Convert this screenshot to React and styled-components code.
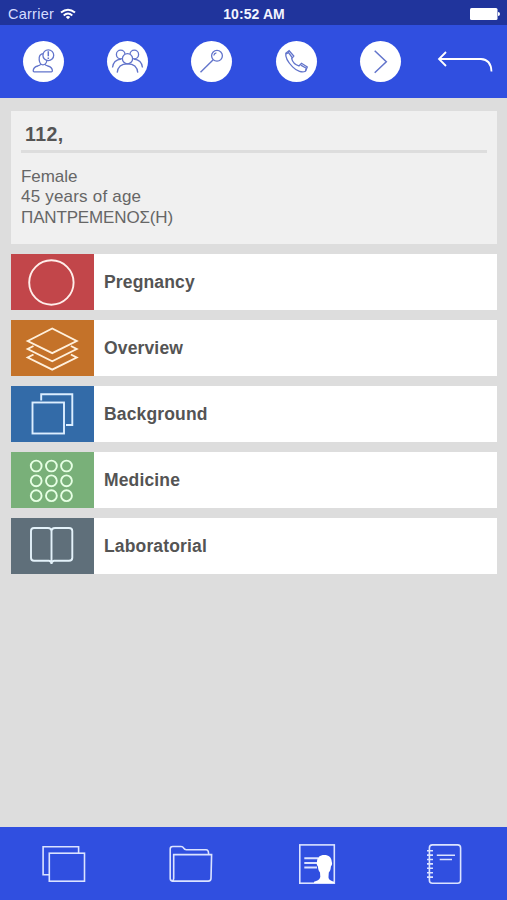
import React from 'react';
import styled, { createGlobalStyle } from 'styled-components';

const GlobalStyle = createGlobalStyle`
  * {
    box-sizing: border-box;
  }

  body {
    margin: 0;
    background-color: #dddddd;
    font-family: "Liberation Sans", Arial, sans-serif;
  }
`;

const Screen = styled.div`
  display: flex;
  flex-direction: column;
  height: 100vh;
  background-color: #dddddd;
`;

const StatusBar = styled.div`
  display: grid;
  grid-template-columns: 1fr auto 1fr;
  align-items: center;
  height: 25px;
  padding: 3px 7px 0 8px;
  background-color: #20349c;
  color: #f2f4ff;
  font-size: 14.5px;
  line-height: 20px;
`;

const Carrier = styled.div`
  display: flex;
  align-items: center;
  gap: 6px;
  color: #d5dcff;
  letter-spacing: 0.25px;
`;

const Clock = styled.div`
  font-size: 14px;
  font-weight: bold;
  letter-spacing: 0.1px;
`;

const Battery = styled.svg`
  justify-self: end;
  margin-right: -1px;
`;

const Toolbar = styled.nav`
  display: grid;
  grid-template-columns: repeat(6, 1fr);
  align-items: center;
  height: 73px;
  padding-left: 1px;
  background-color: #304fe0;
`;

const ToolButton = styled.button`
  display: flex;
  justify-self: center;
  padding: 0;
  border: 0;
  border-radius: ${props => (props.$round ? '50%' : '0')};
  background-color: ${props => (props.$round ? '#ffffff' : 'transparent')};
`;

const Icon = styled.svg`
  display: block;
  fill: none;
  stroke: ${props => props.$color || '#ffffff'};
  stroke-width: ${props => props.$weight || 1.5};
`;

const Content = styled.main`
  flex: 1;
  display: flex;
  flex-direction: column;
  gap: 10px;
  padding: 13px 10px 0 11px;
`;

const PatientCard = styled.section`
  height: 133px;
  padding: 0 10px;
  background-color: #f0f0f0;
  color: #666666;
`;

const PatientName = styled.h1`
  height: 42px;
  margin: 0;
  padding: 2px 4px 0;
  border-bottom: 3px solid #dddddd;
  color: #555555;
  font-size: 19.5px;
  letter-spacing: 0.4px;
  line-height: 42px;
`;

const PatientDetails = styled.div`
  margin-top: 14px;
  font-size: 17px;
  line-height: 20.3px;
`;

const Detail = styled.div`
  letter-spacing: ${props => props.$spacing || '0.2px'};
`;

const MenuRow = styled.div`
  display: flex;
  align-items: center;
  height: 56px;
  background-color: #ffffff;
`;

const Tile = styled.div`
  width: 83px;
  height: 56px;
  background-color: ${props => props.$color};
`;

const MenuLabel = styled.span`
  padding-left: 10px;
  color: #545454;
  font-size: 17.5px;
  font-weight: bold;
  letter-spacing: 0.15px;
`;

const TabBar = styled.nav`
  display: grid;
  grid-template-columns: repeat(4, 1fr);
  align-items: center;
  height: 73px;
  background-color: #304fe0;
`;

const Tab = styled.div`
  display: flex;
  justify-content: center;
`;

const Wifi = () => (
  <svg width="16" height="12" viewBox="0 0 16 12" fill="none" stroke="#ffffff" strokeWidth="2">
    <path d="M1 4.6Q8-1.2 15 4.6M3.7 7.4Q8 3.7 12.3 7.4" />
    <path d="M5.8 9L8 11.3L10.2 9Q8 7 5.8 9Z" fill="#ffffff" stroke="none" />
  </svg>
);

const PatientIcon = () => (
  <>
    <path d="M20.6 12.6c-3.400 0-4.900 2.700-4.400 6.400 .4 3 1.900 4.900 3.700 4.900 2.200 0 3.700-2.100 4.100-4.900" />
    <path d="M17.700 23.200c-.3 1.200-1.200 1.400-2.900 1.800-3 .7-4.500 2.500-4.600 4.800 0 .7.3 1 1 1h17.200c.7 0 1-.3 1-1-.1-2.300-1.700-4.100-4.700-4.800-1.700-.4-2.600-.600-2.900-1.800" />
    <circle cx="25.300" cy="14.200" r="5.400" />
    <path d="M25.300 10.300v5M25.300 16.500v1.500" strokeWidth="1.500" />
  </>
);

const GroupIcon = () => (
  <>
    <circle cx="13.700" cy="13.500" r="4.300" />
    <circle cx="27.300" cy="13.500" r="4.300" />
    <path d="M5.500 26.500c.5-4.600 3.300-7.800 8.700-8.300M35.500 26.500c-.5-4.600-3.300-7.800-8.700-8.300" />
    <circle cx="20.500" cy="17.700" r="5.100" fill="#ffffff" />
    <path d="M10.200 31.600c.5-5.600 4.500-8.800 10.300-8.800s9.800 3.200 10.300 8.800" />
  </>
);

const PinIcon = () => (
  <>
    <circle cx="26" cy="14.800" r="5.400" />
    <path d="M22.200 18.800L9.500 31.300" strokeWidth="1.400" />
    <path d="M22.800 14.500c.2-1.500 1.200-2.500 2.600-2.700" />
  </>
);

const PhoneIcon = () => (
  <>
    <path d="M9.800 12.200l3.300-2.500 4.700 5.400-2.100 2.600c.8 3.300 3.900 6.300 7.200 7.200l2.600-2.600 5.800 3.700-1.900 4.200c-3 1.700-8.400.3-12.800-4.300-4.900-4.900-7.500-9.200-6.800-13.700z" />
    <path d="M10 12.900l2.500-1.300 4 5.400M29.500 30l.8-2.700-5.500-3.200" />
  </>
);

const ChevronIcon = () => (
  <path d="M14.700 9.700L26.300 20.700L14.700 31.700" strokeWidth="1.500" />
);

const tools = [PatientIcon, GroupIcon, PinIcon, PhoneIcon, ChevronIcon];

const CircleIcon = () => <circle cx="40.400" cy="28.500" r="22.200" />;

const LayersIcon = () => (
  <>
    <path d="M16.700 21L41.200 8.500L65.700 21L41.200 33.200Z" />
    <path d="M22.500 26L16.700 29L41.200 41.300L65.700 29L59.900 26" />
    <path d="M22.500 34.500L16.700 37.500L41.200 49.700L65.700 37.500L59.900 34.500" />
  </>
);

const CopyIcon = () => (
  <>
    <rect x="21.500" y="16.500" width="31.500" height="31" />
    <path d="M30.200 14.500V8.300H61.300V39H55" />
  </>
);

const DotsIcon = () => (
  <>
    {[14, 28.800, 43.700].map(y =>
      [25.200, 40.400, 55.500].map(x => <circle key={`${x}-${y}`} cx={x} cy={y} r="5.400" />)
    )}
  </>
);

const BookIcon = () => (
  <>
    <path d="M40.500 45V13.500Q40.500 10 37 10H23Q20 10 20 13V39.700Q20 42.700 23 42.700H38Q40.500 43 40.500 46Q40.500 43 43 42.700H58Q61.300 42.700 61.300 39.700V13Q61.300 10 58 10H44Q40.500 10 40.500 13.500" />
  </>
);

const menu = [
  { label: 'Pregnancy', color: '#c2464a', stroke: '#ffeeea', icon: CircleIcon },
  { label: 'Overview', color: '#c47229', stroke: '#fff0dc', icon: LayersIcon },
  { label: 'Background', color: '#336ba8', stroke: '#dceeff', icon: CopyIcon },
  { label: 'Medicine', color: '#79b079', stroke: '#e6ffe4', icon: DotsIcon },
  { label: 'Laboratorial', color: '#5f6f7a', stroke: '#e4f2fa', icon: BookIcon }
];

const WindowsTab = () => (
  <>
    <path d="M10.300 34.800H4.100V6.800H39.600V13.200" />
    <rect x="10.300" y="13.200" width="35.200" height="28" />
  </>
);

const FolderTab = () => (
  <>
    <path d="M7 41.100Q4.200 41.100 4.200 38.500V9Q4.200 6.500 6.700 6.500H15Q16.800 6.500 17.700 8.200Q18.500 9.800 20.300 9.800H40Q42.600 9.800 42.600 14" />
    <path d="M7.700 14.600H45.600L45 38.500Q44.900 41.100 42.300 41.100H6Q7.700 40.500 7.700 38.500Z" />
  </>
);

const ContactTab = () => (
  <>
    <rect x="6.800" y="4.900" width="34.500" height="38.300" />
    <path d="M11.300 18.300H25M11.300 23H24M11.300 27.500H24" strokeWidth="2" />
    <path
      d="M31.300 15C26.800 15 24 17.600 24 22C23.300 23.500 23.900 25.500 24.900 26.500C25.100 29 25.700 31 27 32.500L27.300 37C26.500 40 24 41 21 41.700V43H41V41.700C37 40.500 35.500 39.500 35.500 37L35.800 32.500C37.300 31 37.700 29 37.900 26.500C38.900 25.500 39.500 23.500 38.800 22C38.600 17.600 35.800 15 31.300 15Z"
      fill="#ffffff"
      stroke="none"
    />
  </>
);

const NotebookTab = () => (
  <>
    <rect x="9.400" y="4.900" width="31.200" height="38.300" rx="3" />
    <path d="M7 10.700H13M7 15.100H13M7 19.500H13M7 23.900H13M7 28.300H13M7 32.700H13M7 37.100H13" />
    <path d="M16.800 15.200H35M19.700 19.500H32" />
  </>
);

const tabs = [WindowsTab, FolderTab, ContactTab, NotebookTab];

const App = () => (
  <Screen>
    <GlobalStyle />
    <StatusBar>
      <Carrier>
        Carrier
        <Wifi />
      </Carrier>
      <Clock>10:52 AM</Clock>
      <Battery width="32" height="14" viewBox="0 0 32 14" fill="#ffffff">
        <rect x="1" y="1" width="27.500" height="12" rx="1.500" />
        <path d="M29 5Q31 5 31 7Q31 9 29 9Z" />
      </Battery>
    </StatusBar>

    <Toolbar>
      {tools.map((Glyph, index) => (
        <ToolButton key={index} $round>
          <Icon width="41" height="41" viewBox="0 0 41 41" $color="#6274cb" $weight={1.3}>
            <Glyph />
          </Icon>
        </ToolButton>
      ))}
      <ToolButton>
        <Icon width="56" height="41" viewBox="0 0 56 41" $weight={1.8}>
          <path d="M9 11L2 18L9 25M2 18H44Q54 18.500 54.500 30.500" />
        </Icon>
      </ToolButton>
    </Toolbar>

    <Content>
      <PatientCard>
        <PatientName>112,</PatientName>
        <PatientDetails>
          <Detail $spacing="-0.05px">Female</Detail>
          <Detail>45 years of age</Detail>
          <Detail $spacing="-0.15px">ΠΑΝΤΡΕΜΕΝΟΣ(Η)</Detail>
        </PatientDetails>
      </PatientCard>
      {menu.map(({ label, color, stroke, icon: Glyph }) => (
        <MenuRow key={label}>
          <Tile $color={color}>
            <Icon width="83" height="56" viewBox="0 0 83 56" $color={stroke} $weight={1.9}>
              <Glyph />
            </Icon>
          </Tile>
          <MenuLabel>{label}</MenuLabel>
        </MenuRow>
      ))}
    </Content>

    <TabBar>
      {tabs.map((Glyph, index) => (
        <Tab key={index}>
          <Icon width="48" height="48" viewBox="0 0 48 48" $color="#dbe3ff" $weight={1.6}>
            <Glyph />
          </Icon>
        </Tab>
      ))}
    </TabBar>
  </Screen>
);

export default App;
